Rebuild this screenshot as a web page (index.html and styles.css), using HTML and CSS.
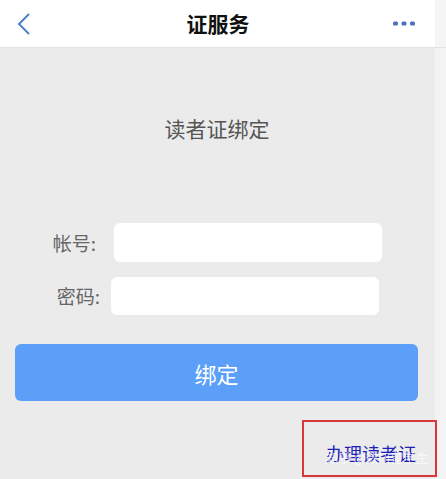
FILE: index.html
```html
<!DOCTYPE html>
<html lang="zh">
<head>
<meta charset="utf-8">
<link rel="stylesheet" href="styles.css">
</head>
<body>
<div class="page">
  <header class="nav">
    <svg class="back" width="14" height="24" viewBox="0 0 14 24"><path d="M12 2 L2 12 L12 22" fill="none" stroke="#4f7fd0" stroke-width="2"/></svg>
    <div class="nav-title">证服务</div>
    <svg class="more" width="22" height="5" viewBox="0 0 22 5"><rect x="0" y="0.5" width="5" height="4" rx="1.5" fill="#4a6fc0"/><rect x="8.5" y="0.5" width="5" height="4" rx="1.5" fill="#4a6fc0"/><rect x="17" y="0.5" width="5" height="4" rx="1.5" fill="#4a6fc0"/></svg>
  </header>
  <main class="content">
    <h1 class="title">读者证绑定</h1>
    <div class="form">
      <div class="row row-a"><span class="label">帐号:</span><div class="input"></div></div>
      <div class="row row-b"><span class="label">密码:</span><div class="input"></div></div>
    </div>
    <div class="btn">绑定</div>
    <div class="apply-wrap">
      <div class="apply-box">
        <span class="apply">办理读者证</span>
        <span class="watermark">知乎 @数研留学生</span>
      </div>
    </div>
  </main>
</div>
</body>
</html>
```

FILE: styles.css
```css
html, body { margin: 0; padding: 0; }
body {
  width: 446px;
  height: 479px;
  overflow: hidden;
  background: #ebebeb;
  font-family: "Noto Sans CJK SC", "Noto Sans", sans-serif;
}
.page {
  width: 446px;
  height: 479px;
  background: linear-gradient(to right, #ebebeb 0, #ebebeb 435px, #f3f3f3 435px);
}
.nav {
  height: 47px;
  background: linear-gradient(to right, #ffffff 0, #ffffff 435px, #f5f5f5 435px);
  border-bottom: 1px solid #e2e2e2;
  display: flex;
  align-items: center;
  position: relative;
}
.back { margin-left: 17px; }
.nav-title {
  position: absolute;
  left: 0; right: 10px;
  text-align: center;
  font-size: 21px;
  font-weight: 700;
  color: #111;
  line-height: 47px;
}
.more { margin-left: auto; margin-right: 31px; }
.content { display: flex; flex-direction: column; }
.title {
  margin: 66px 0 0 0;
  text-align: center;
  font-size: 21px;
  font-weight: 400;
  line-height: 28px;
  color: #555;
  padding-right: 12px;
}
.form {
  margin-top: 81px;
  display: flex;
  flex-direction: column;
  gap: 15px;
}
.row { display: flex; align-items: center; }
.label {
  box-sizing: border-box;
  flex-shrink: 0;
  white-space: nowrap;
  font-size: 19px;
  line-height: 26px;
  color: #666;
  text-align: right;
}
.row-a .label { width: 114px; padding-right: 18px; }
.row-b .label { width: 111px; padding-right: 11px; }
.input {
  width: 268px;
  height: 39px;
  background: #fff;
  border-radius: 6px;
}
.row-b .input { height: 38px; }
.btn {
  margin: 29px 28px 0 15px;
  height: 57px;
  background: #5b9ff8;
  border-radius: 6px;
  color: #fff;
  font-size: 22px;
  display: flex;
  align-items: center;
  justify-content: center;
}
.apply-wrap {
  display: flex;
  justify-content: flex-end;
  padding-right: 9px;
  margin-top: 19px;
}
.apply-box {
  box-sizing: border-box;
  width: 135px;
  height: 57px;
  border: 2px solid #d8353d;
  position: relative;
  display: flex;
  align-items: flex-end;
  justify-content: flex-start;
}
.apply {
  font-size: 18px;
  color: #1e1eb8;
  line-height: 24px;
  margin-bottom: 10px;
  margin-left: 22px;
}
.watermark {
  position: absolute;
  left: 22px;
  bottom: 8px;
  font-size: 12.5px;
  color: rgba(255,255,255,0.7);
  white-space: nowrap;
}
```
